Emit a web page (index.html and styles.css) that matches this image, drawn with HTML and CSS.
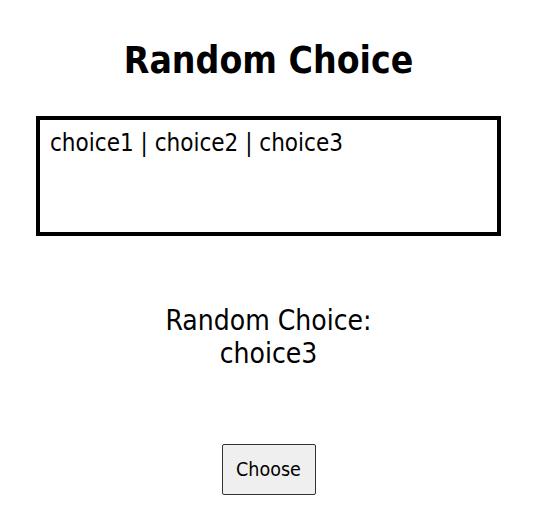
FILE: index.html
```html
<!DOCTYPE html>
<html>
<head>
<meta charset="utf-8">
<link rel="stylesheet" href="styles.css">
</head>
<body>
<main class="page">
  <h1 class="title">Random Choice</h1>
  <textarea class="choices">choice1 | choice2 | choice3</textarea>
  <p class="result">Random Choice:<br>choice3</p>
  <button class="choose">Choose</button>
</main>
</body>
</html>
```
FILE: styles.css
```css
html, body {
  margin: 0;
  padding: 0;
  background: #fff;
}
.page {
  font-family: "DejaVu Sans Condensed", "DejaVu Sans", sans-serif;
  color: #000;
  display: flex;
  flex-direction: column;
  align-items: center;
  padding: 0 36px;
}
.title {
  margin: 38px 0 0;
  font-size: 37px;
  line-height: 46px;
  font-weight: bold;
}
.choices {
  box-sizing: border-box;
  width: 100%;
  height: 120px;
  margin-top: 32px;
  border: 4px solid #000;
  padding: 7px 10px;
  font-family: "DejaVu Sans Condensed", "DejaVu Sans", sans-serif;
  font-size: 24px;
  line-height: 32px;
  resize: none;
  outline: none;
  color: #000;
}
.result {
  margin: 68px 0 0;
  text-align: center;
  font-size: 28px;
  line-height: 33px;
}
.choose {
  margin-top: 74px;
  width: 94px;
  height: 51px;
  font-family: "DejaVu Sans Condensed", "DejaVu Sans", sans-serif;
  font-size: 19.5px;
  background: #efefef;
  border: 1px solid #333;
  border-radius: 2px;
  color: #000;
  padding: 0;
}
```
